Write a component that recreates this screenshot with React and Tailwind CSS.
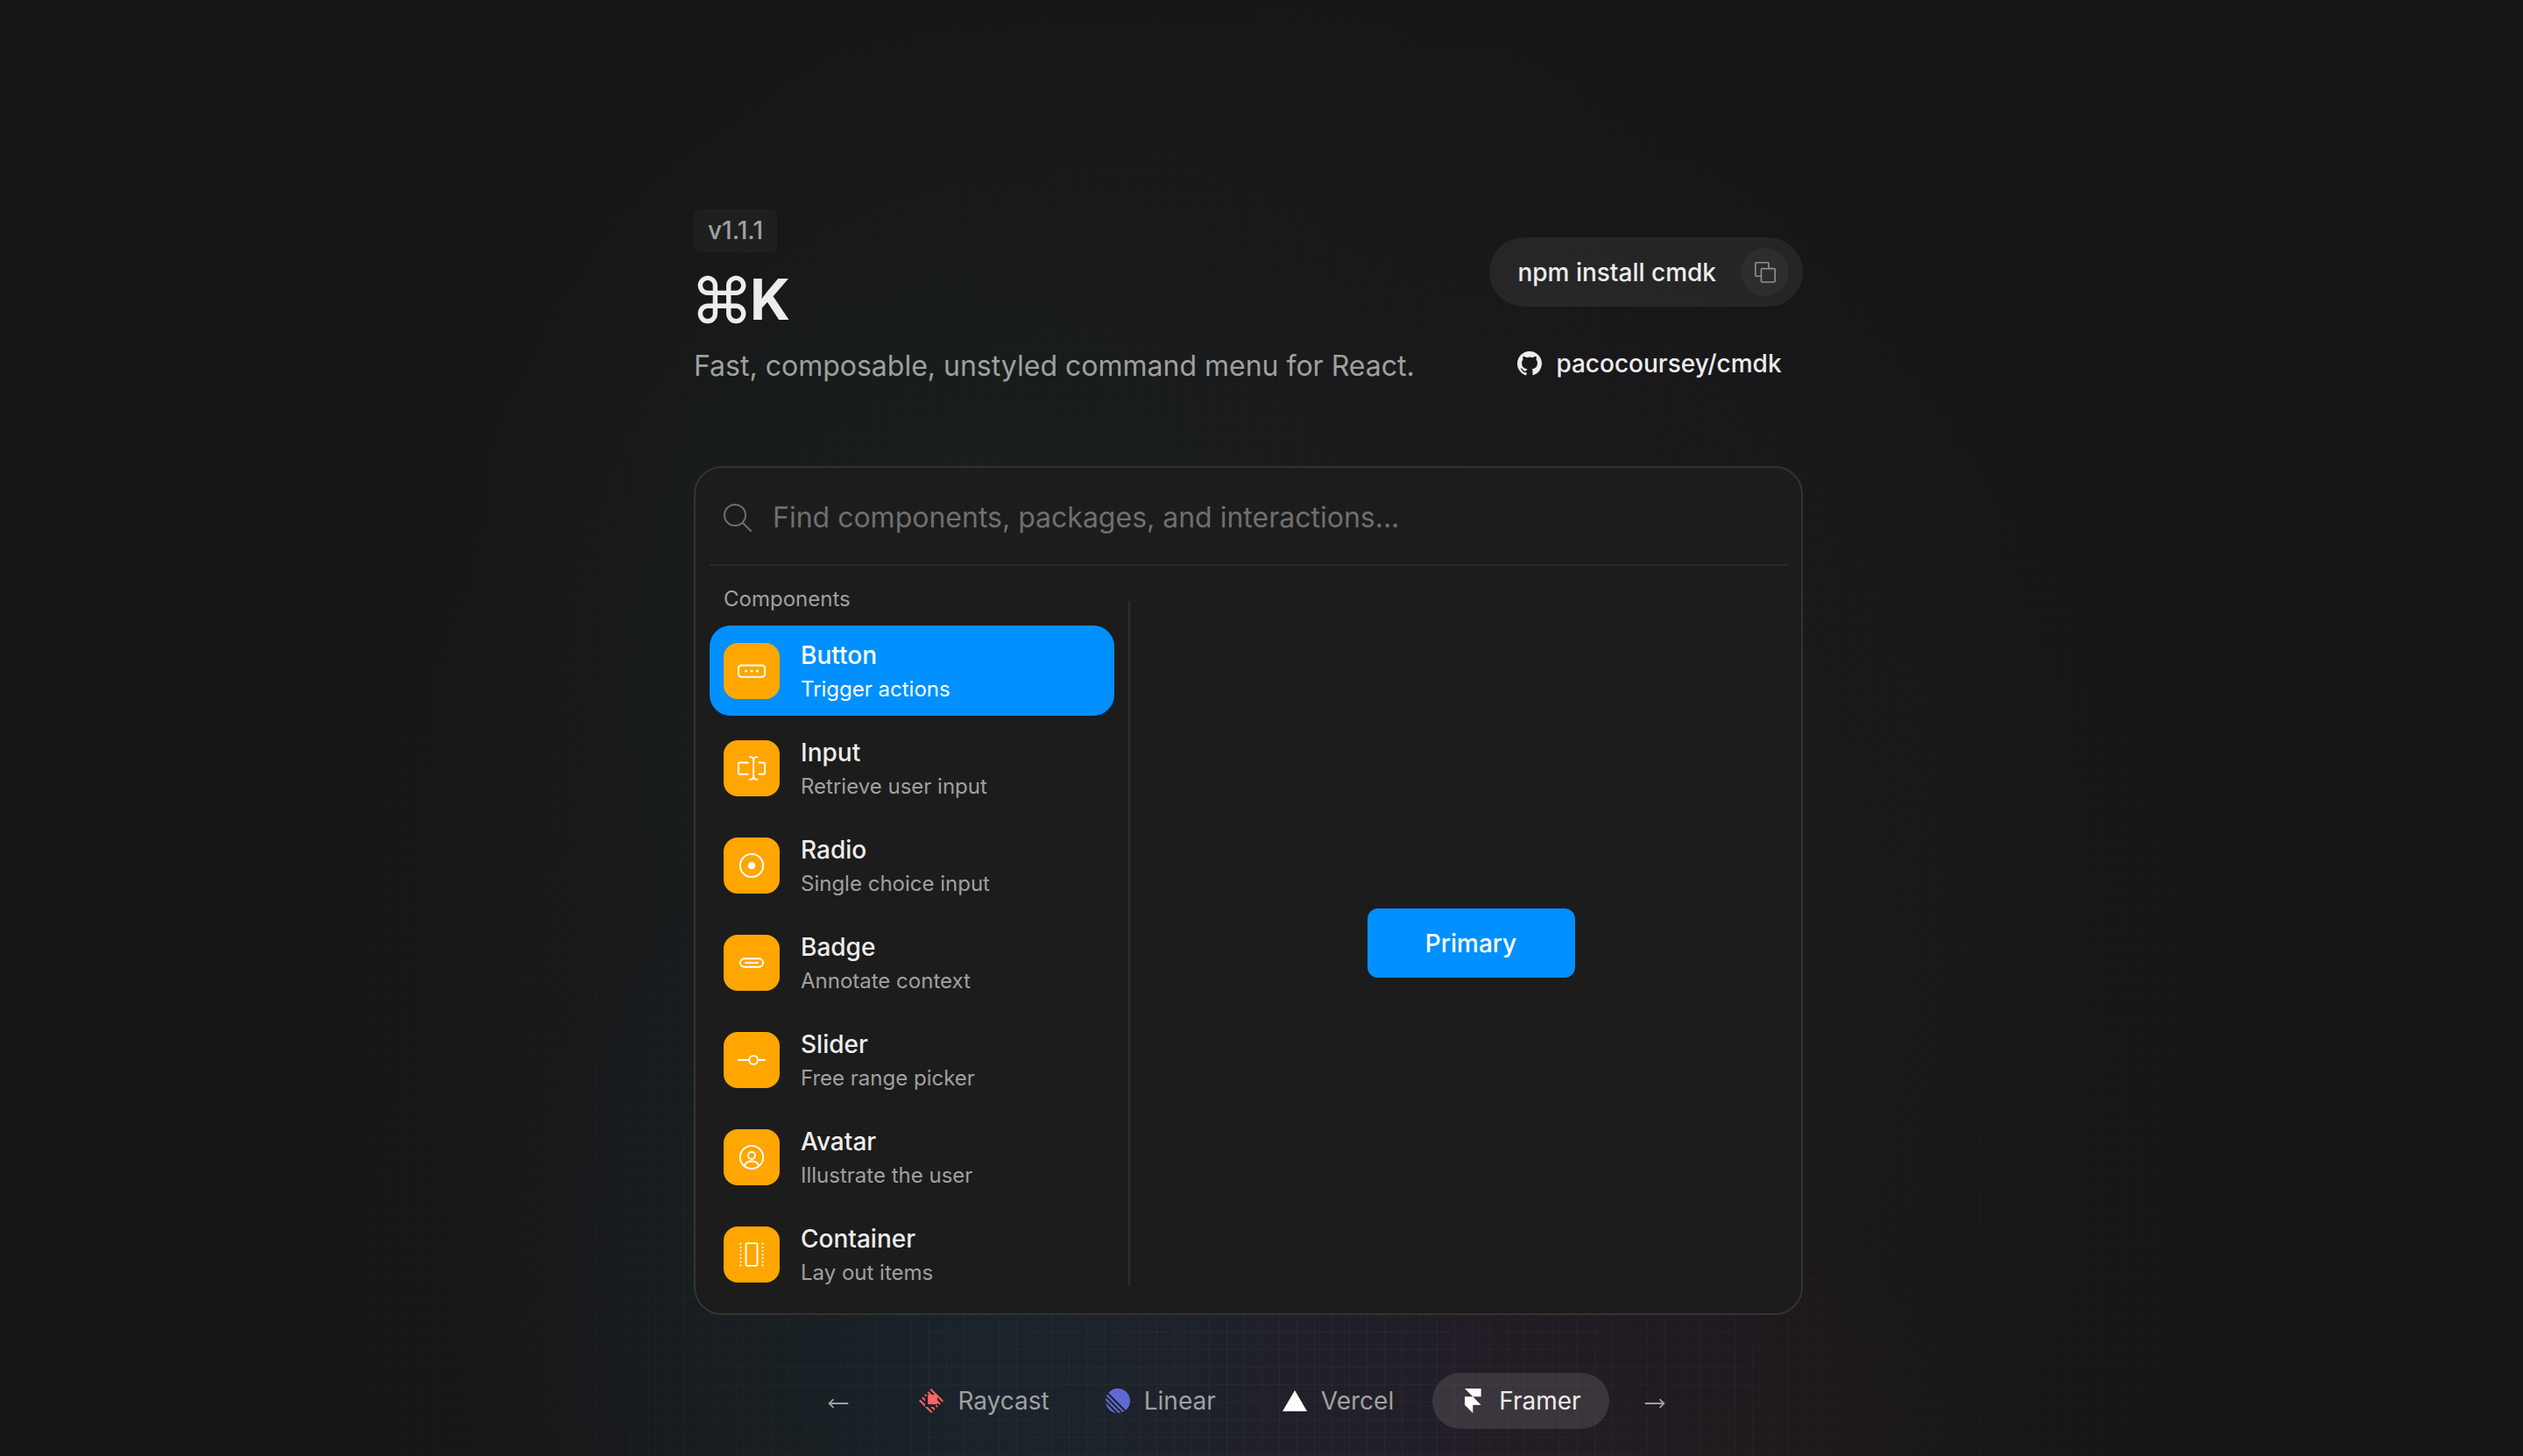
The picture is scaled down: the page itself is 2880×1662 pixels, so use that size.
import React from "react";

const stroke = { fill: "none", stroke: "currentColor", strokeWidth: 0.9, strokeLinecap: "round", strokeLinejoin: "round" };
const dots = [1.7, 3.6, 5.6, 7.5, 9.4, 11.4, 13.3];

function Glyph({ children }) {
  return (
    <svg viewBox="0 0 15 15" className="size-8" {...stroke} aria-hidden="true">
      {children}
    </svg>
  );
}

const items = [
  {
    title: "Button",
    subtitle: "Trigger actions",
    icon: (
      <Glyph>
        <rect x="0.45" y="4.45" width="14.1" height="6.2" rx="1.5" />
        <g fill="currentColor" stroke="none">
          <circle cx="4.5" cy="7.5" r="0.75" />
          <circle cx="7.5" cy="7.5" r="0.75" />
          <circle cx="10.5" cy="7.5" r="0.75" />
        </g>
      </Glyph>
    ),
  },
  {
    title: "Input",
    subtitle: "Retrieve user input",
    icon: (
      <Glyph>
        <path d="M6.5 1.45C7.7 1.45 8.5 2 8.5 3V12C8.5 13 7.7 13.55 6.5 13.55M10.5 1.45C9.3 1.45 8.5 2 8.5 3M8.5 12C8.5 13 9.3 13.55 10.5 13.55" />
        <path d="M5.6 4.45H1.2A.75.75 0 0 0 .45 5.2V9.9A.75.75 0 0 0 1.2 10.65H5.6M11.4 4.45H13.8A.75.75 0 0 1 14.55 5.2V9.9A.75.75 0 0 1 13.8 10.65H11.4" />
      </Glyph>
    ),
  },
  {
    title: "Radio",
    subtitle: "Single choice input",
    icon: (
      <Glyph>
        <circle cx="7.5" cy="7.5" r="6.15" />
        <circle cx="7.5" cy="7.5" r="2" fill="currentColor" stroke="none" />
      </Glyph>
    ),
  },
  {
    title: "Badge",
    subtitle: "Annotate context",
    icon: (
      <Glyph>
        <rect x="1.4" y="5.3" width="12.2" height="4.4" rx="2.2" />
        <path d="M4.2 7.5H10.8" />
      </Glyph>
    ),
  },
  {
    title: "Slider",
    subtitle: "Free range picker",
    icon: (
      <Glyph>
        <path d="M.5 7.5H6.2M10.8 7.5H14.5" />
        <circle cx="8.5" cy="7.5" r="2.3" />
      </Glyph>
    ),
  },
  {
    title: "Avatar",
    subtitle: "Illustrate the user",
    icon: (
      <Glyph>
        <circle cx="7.5" cy="7.5" r="6.15" />
        <circle cx="7.5" cy="6.6" r="1.9" />
        <path d="M3.6 12C4.3 10.4 5.7 9.6 7.5 9.6S10.7 10.4 11.4 12" />
      </Glyph>
    ),
  },
  {
    title: "Container",
    subtitle: "Lay out items",
    icon: (
      <Glyph>
        <rect x="4.45" y="1.45" width="6.1" height="12.1" rx="0.7" />
        <g fill="currentColor" stroke="none">
          {dots.map((y) => (
            <React.Fragment key={y}>
              <circle cx="1.6" cy={y} r="0.48" />
              <circle cx="13.4" cy={y} r="0.48" />
            </React.Fragment>
          ))}
        </g>
      </Glyph>
    ),
  },
];

function CopyIcon() {
  return (
    <svg viewBox="0 0 24 24" className="size-6" fill="none" stroke="currentColor" strokeWidth="1.6" strokeLinejoin="round" aria-hidden="true">
      <path d="M7.3 16.2H1.8A1 1 0 0 1 .8 15.2V1.8A1 1 0 0 1 1.8.8H15A1 1 0 0 1 16 1.8V7.3" />
      <rect x="7.4" y="7.6" width="15.8" height="15.4" rx="1" />
    </svg>
  );
}

function GithubIcon() {
  return (
    <svg viewBox="0 0 16 16" className="size-7" fill="currentColor" aria-hidden="true">
      <path d="M8 0C3.58 0 0 3.58 0 8c0 3.54 2.29 6.53 5.47 7.59.4.07.55-.17.55-.38 0-.19-.01-.82-.01-1.49-2.01.37-2.53-.49-2.69-.94-.09-.23-.48-.94-.82-1.13-.28-.15-.68-.52-.01-.53.63-.01 1.08.58 1.23.82.72 1.21 1.87.87 2.33.66.07-.52.28-.87.51-1.07-1.78-.2-3.64-.89-3.64-3.95 0-.87.31-1.59.82-2.15-.08-.2-.36-1.02.08-2.12 0 0 .67-.21 2.2.82.64-.18 1.32-.27 2-.27.68 0 1.36.09 2 .27 1.53-1.04 2.2-.82 2.2-.82.44 1.1.16 1.92.08 2.12.51.56.82 1.27.82 2.15 0 3.07-1.87 3.75-3.65 3.95.29.25.54.73.54 1.48 0 1.07-.01 1.93-.01 2.2 0 .21.15.46.55.38A8.013 8.013 0 0 0 16 8c0-4.42-3.58-8-8-8z" />
    </svg>
  );
}

function SearchIcon() {
  return (
    <svg viewBox="0 0 32 32" className="size-8 shrink-0" fill="none" stroke="currentColor" strokeWidth="2" strokeLinecap="round" aria-hidden="true">
      <circle cx="13" cy="13" r="12" />
      <path d="M21.8 21.8L31 31" />
    </svg>
  );
}

function ArrowLeft() {
  return (
    <svg viewBox="0 0 24 24" className="size-6" fill="none" stroke="currentColor" strokeWidth="1.8" strokeLinecap="round" strokeLinejoin="round" aria-hidden="true">
      <path d="M22.5 15H2M6 10.6L1.6 15L6 19.4" />
    </svg>
  );
}

function ArrowRight() {
  return (
    <svg viewBox="0 0 24 24" className="size-6" fill="none" stroke="currentColor" strokeWidth="1.8" strokeLinecap="round" strokeLinejoin="round" aria-hidden="true">
      <path d="M1.5 15H22M18 10.6L22.4 15L18 19.4" />
    </svg>
  );
}

function RaycastIcon() {
  return (
    <svg viewBox="0 0 28 28" className="size-7" aria-hidden="true">
      <path
        fill="#FF6363"
        fillRule="evenodd"
        d="M7 18.079V21L0 14L1.46 12.54L7 18.081V18.079ZM9.921 21H7L14 28L15.46 26.54L9.921 21ZM26.535 15.462L27.996 14L13.996 0L12.538 1.466L18.077 7.004H14.73L10.864 3.146L9.404 4.606L11.809 7.01H10.129V17.876H20.994V16.196L23.399 18.6L24.859 17.14L20.994 13.274V9.927L26.535 15.462ZM7.73 6.276L6.265 7.738L7.833 9.304L9.294 7.844L7.73 6.276ZM20.162 18.708L18.702 20.17L20.268 21.738L21.73 20.276L20.162 18.708ZM4.596 9.41L3.134 10.872L7 14.738V11.815L4.596 9.41ZM16.192 21.006H13.268L17.134 24.872L18.596 23.41L16.192 21.006Z"
      />
    </svg>
  );
}

function LinearIcon() {
  return (
    <svg viewBox="0 0 64 64" className="size-7" aria-hidden="true">
      <path
        fill="#5E6AD2"
        d="M0.403 37.3991L26.6009 63.597C13.2225 61.3356 2.66442 50.7775 0.403 37.3991ZM0 30.2868L33.7132 64C35.7182 63.8929 37.6742 63.6013 39.5645 63.142L0.85799 24.4355C0.398679 26.3259 0.10713 28.2818 0 30.2868ZM2.53593 19.4042L44.5958 61.4641C46.1277 60.8066 47.598 60.0331 48.9956 59.1546L4.84543 15.0044C3.96691 16.402 3.19339 17.8723 2.53593 19.4042ZM7.69501 11.1447C13.5677 4.32093 22.2677 0 31.9769 0C49.6628 0 64 14.3372 64 32.0231C64 41.7323 59.6791 50.4323 52.8553 56.305L7.69501 11.1447Z"
      />
    </svg>
  );
}

function VercelIcon() {
  return (
    <svg viewBox="0 0 28 28" className="size-7" aria-hidden="true">
      <path fill="#fff" d="M14 2L28 26H0Z" />
    </svg>
  );
}

function FramerIcon() {
  return (
    <svg viewBox="0 0 28 28" className="size-7" aria-hidden="true">
      <path fill="#fff" d="M5 0H23.6V9.3H14.3ZM5 9.3H14.3L23.6 18.7H5ZM5 18.7H14.3V28Z" />
    </svg>
  );
}

const themes = [
  { name: "Raycast", icon: <RaycastIcon />, style: "pl-10 pr-5 text-[#a0a0a0]" },
  { name: "Linear", icon: <LinearIcon />, style: "px-8 text-[#a0a0a0]" },
  { name: "Vercel", icon: <VercelIcon />, style: "px-8 text-[#a0a0a0]" },
  { name: "Framer", icon: <FramerIcon />, style: "px-8 text-[#ededed] bg-[#ffffff1c]" },
];

function Backdrop() {
  return (
    <div className="absolute inset-0 -z-10 overflow-hidden bg-[#161616]" aria-hidden="true">
      <div className="absolute inset-0 bg-[radial-gradient(ellipse_600px_560px_at_39%_34%,#17352628,transparent),radial-gradient(ellipse_600px_700px_at_39%_96%,#1b3a5040,transparent),radial-gradient(ellipse_640px_600px_at_54%_100%,#2c264448,transparent),radial-gradient(ellipse_660px_900px_at_60%_62%,#2c193440,transparent),radial-gradient(ellipse_500px_300px_at_64%_100%,#40202038,transparent),radial-gradient(ellipse_600px_900px_at_37%_62%,#1630383c,transparent),radial-gradient(ellipse_1100px_1300px_at_50%_70%,#1d1d1dcc,transparent)]" />
      <div className="absolute inset-0 bg-[linear-gradient(to_right,#ffffff09_1px,transparent_1px),linear-gradient(to_bottom,#ffffff09_1px,transparent_1px)] bg-[size:20px_20px] [mask-image:radial-gradient(ellipse_50%_110%_at_50%_100%,#000,transparent)]" />
    </div>
  );
}

export default function App() {
  return (
    <div className="relative isolate flex min-h-screen flex-col items-center pr-[30px] font-[Inter,sans-serif] text-[28px] leading-[34px] text-[#ededed]">
      <Backdrop />
      <main className="flex w-full max-w-[1266px] flex-col pt-[239px]">
        <header className="flex justify-between">
          <div className="flex flex-col items-start">
            <span className="rounded-lg bg-[#ffffff08] px-4 py-2 font-medium leading-[33px] text-[#a0a0a0]">v1.1.1</span>
            <h1 className="-ml-1 mt-4 flex h-[76px] items-center text-[64px] font-bold leading-[76px]">
              <span className="-mr-1 text-[72px] font-normal">⌘</span>K
            </h1>
            <p className="mt-4 text-[32px] leading-[44px] text-[#a0a0a0]">Fast, composable, unstyled command menu for React.</p>
          </div>
          <div className="flex flex-col items-start pt-8">
            <button className="flex h-[79px] items-center gap-7 rounded-full bg-[#ffffff10] pl-8 pr-4 font-medium">
              npm install cmdk
              <span className="flex size-[55px] items-center justify-center rounded-full bg-[#ffffff0a] text-[#8f8f8f]">
                <CopyIcon />
              </span>
            </button>
            <a href="#github" className="ml-8 mt-12 flex items-center gap-4 font-medium">
              <GithubIcon />
              pacocoursey/cmdk
            </a>
          </div>
        </header>

        <section className="mt-[92px] rounded-[32px] border-2 border-[#333333] bg-[#1c1c1c] px-4 pb-4" aria-label="Command menu">
          <label className="flex h-28 items-center gap-6 border-b-2 border-[#292929] pl-4 pt-1 text-[#6f6f6f]">
            <SearchIcon />
            <input
              type="text"
              aria-label="Search"
              placeholder="Find components, packages, and interactions..."
              className="min-w-0 flex-1 bg-transparent text-[32px] leading-[40px] outline-none placeholder:text-[#6f6f6f]"
            />
          </label>
          <div className="flex">
            <div className="w-[462px]">
              <h2 className="px-4 pb-4 pt-6 text-2xl leading-[28px] text-[#a0a0a0]">Components</h2>
              <ul className="flex flex-col gap-2">
                {items.map((item, i) => (
                  <li key={item.title}>
                    <button className={i === 0 ? "flex h-[103px] w-full items-center gap-6 rounded-3xl bg-[#0090ff] px-4 text-left text-white" : "flex h-[103px] w-full items-center gap-6 rounded-3xl px-4 text-left"}>
                      <span className="flex size-16 items-center justify-center rounded-2xl bg-[#ffa600] text-white">{item.icon}</span>
                      <span className="flex flex-col gap-2">
                        <span className="font-medium leading-[34px]">{item.title}</span>
                        <span className={i === 0 ? "text-2xl leading-[28px]" : "text-2xl leading-[28px] text-[#a0a0a0]"}>{item.subtitle}</span>
                      </span>
                    </button>
                  </li>
                ))}
              </ul>
            </div>
            <div className="mb-4 ml-4 mt-10 w-0.5 bg-[#2e2e2e]" />
            <div className="flex flex-1 items-center justify-center pl-7 pt-6">
              <button className="h-[79px] w-[237px] rounded-xl bg-[#0090ff] font-medium text-white">Primary</button>
            </div>
          </div>
        </section>
      </main>

      <nav className="mt-[66px] flex items-center gap-6 pr-1 text-[#a0a0a0]" aria-label="Themes">
        <button aria-label="Previous theme" className="p-4"><ArrowLeft /></button>
        <div className="flex gap-3">
          {themes.map((t) => (
            <button key={t.name} className={`flex h-16 items-center gap-4 rounded-full ${t.style}`}>
              {t.icon}
              {t.name}
            </button>
          ))}
        </div>
        <button aria-label="Next theme" className="p-4"><ArrowRight /></button>
      </nav>
    </div>
  );
}
